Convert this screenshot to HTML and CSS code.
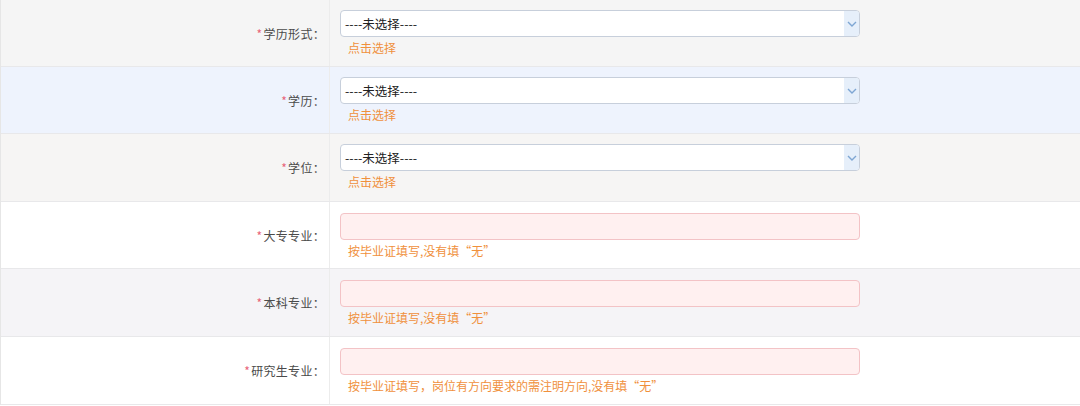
FILE: index.html
```html
<!DOCTYPE html>
<html lang="zh">
<head>
<meta charset="utf-8">
<link rel="stylesheet" href="styles.css">
</head>
<body>
<div class="form">
  <div class="row r-grey">
    <div class="label"><span class="req">*</span>学历形式：</div>
    <div class="field">
      <div class="select"><span class="sel-text">----未选择----</span><span class="arrow"><svg width="10" height="6" viewBox="0 0 10 6"><path d="M1 1 L5 5 L9 1" fill="none" stroke="#7ea6d3" stroke-width="1.4"/></svg></span></div>
      <div class="hint">点击选择</div>
    </div>
  </div>
  <div class="row r-blue">
    <div class="label"><span class="req">*</span>学历：</div>
    <div class="field">
      <div class="select"><span class="sel-text">----未选择----</span><span class="arrow"><svg width="10" height="6" viewBox="0 0 10 6"><path d="M1 1 L5 5 L9 1" fill="none" stroke="#7ea6d3" stroke-width="1.4"/></svg></span></div>
      <div class="hint">点击选择</div>
    </div>
  </div>
  <div class="row r-warm tall">
    <div class="label"><span class="req">*</span>学位：</div>
    <div class="field">
      <div class="select"><span class="sel-text">----未选择----</span><span class="arrow"><svg width="10" height="6" viewBox="0 0 10 6"><path d="M1 1 L5 5 L9 1" fill="none" stroke="#7ea6d3" stroke-width="1.4"/></svg></span></div>
      <div class="hint">点击选择</div>
    </div>
  </div>
  <div class="row r-white">
    <div class="label"><span class="req">*</span>大专专业：</div>
    <div class="field input-field">
      <div class="input"></div>
      <div class="hint">按毕业证填写,没有填“无”</div>
    </div>
  </div>
  <div class="row r-lilac tall">
    <div class="label"><span class="req">*</span>本科专业：</div>
    <div class="field input-field">
      <div class="input"></div>
      <div class="hint">按毕业证填写,没有填“无”</div>
    </div>
  </div>
  <div class="row r-white tall">
    <div class="label"><span class="req">*</span>研究生专业：</div>
    <div class="field input-field">
      <div class="input"></div>
      <div class="hint">按毕业证填写，岗位有方向要求的需注明方向,没有填“无”</div>
    </div>
  </div>
</div>
</body>
</html>
```

FILE: styles.css
```css
html, body {
  margin: 0;
  padding: 0;
  background: #ffffff;
}
body {
  font-family: "Microsoft YaHei", "Noto Sans CJK SC", "Liberation Sans", sans-serif;
  font-size: 12px;
}
.form {
  width: 1080px;
  border-left: 1px solid #e6e6e6;
  box-sizing: border-box;
}
.row {
  display: grid;
  grid-template-columns: 329px 1fr;
  height: 67px;
  border-bottom: 1px solid #e8e8ea;
  box-sizing: border-box;
}
.row.tall {
  height: 68px;
}
.r-grey { background: #f5f5f5; }
.r-blue { background: #eef3fd; }
.r-warm { background: #f6f5f4; }
.r-white { background: #ffffff; }
.r-lilac { background: #f5f4f7; }
.label {
  border-right: 1px solid #ececec;
  display: flex;
  align-items: center;
  justify-content: flex-end;
  padding-right: 4px;
  color: #4a4a4a;
  font-size: 12px;
  letter-spacing: 0.3px;
}
.req {
  color: #e8657a;
  margin-right: 1px;
}
.field {
  padding-left: 10px;
  padding-top: 10px;
  display: flex;
  flex-direction: column;
}
.input-field {
  padding-top: 11px;
}
.select, .input {
  width: 520px;
  height: 27px;
  box-sizing: border-box;
  border-radius: 4px;
}
.select {
  background: #ffffff;
  border: 1px solid #c7cfdb;
  display: flex;
  align-items: center;
  justify-content: space-between;
  overflow: hidden;
}
.sel-text {
  padding-left: 4px;
  color: #222222;
  font-size: 12.5px;
}
.arrow {
  width: 15px;
  height: 100%;
  background: #e6effa;
  display: flex;
  align-items: center;
  justify-content: center;
}
.input {
  background: #fff0f0;
  border: 1px solid #f3c3c6;
}
.hint {
  margin-top: 4px;
  padding-left: 8px;
  color: #f0903c;
  font-size: 12px;
  line-height: 14px;
}
```
